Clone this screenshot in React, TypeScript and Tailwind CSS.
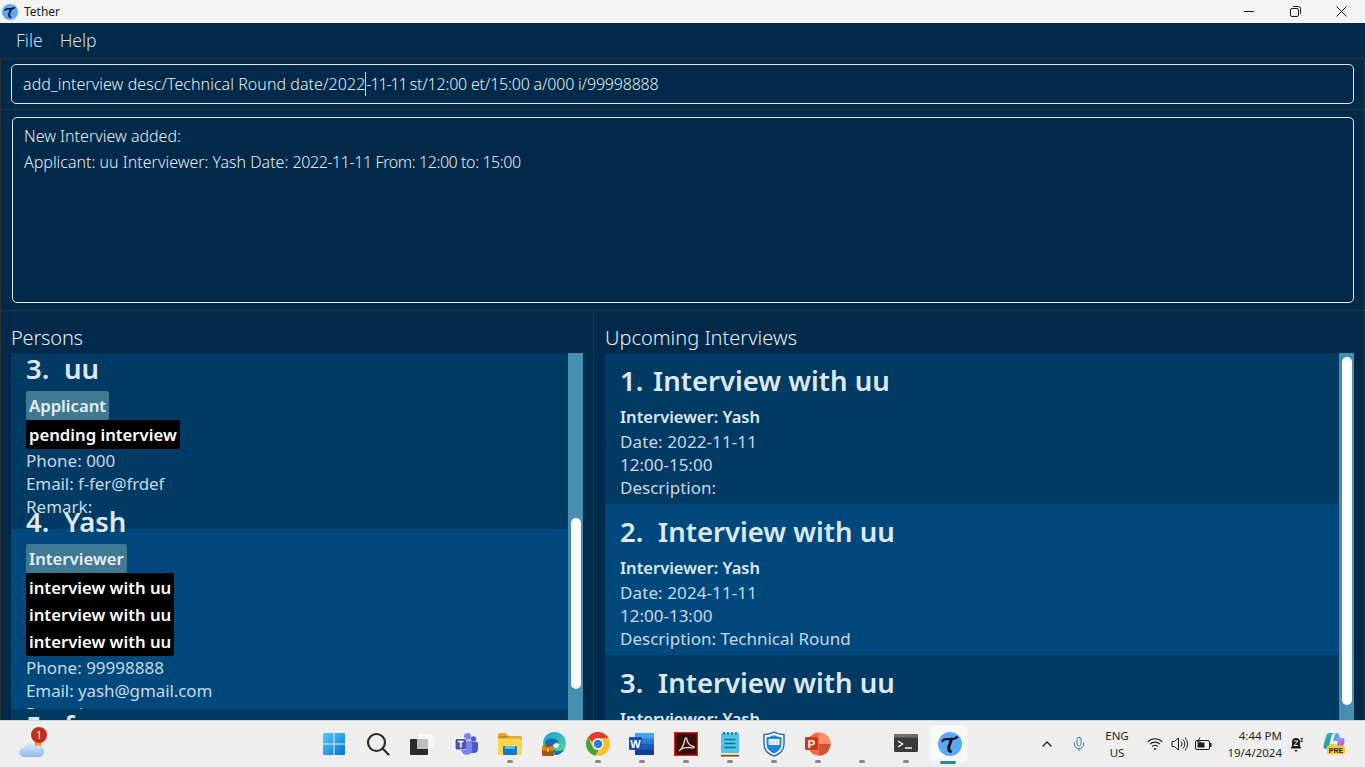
import { ChevronUp, Mic } from "lucide-react";

const uiFont = "font-['Noto_Sans',sans-serif]";

const TetherLogo = ({ size = 16 }: { size?: number }) => (
  <svg width={size} height={size} viewBox="0 0 24 24">
    <circle cx="12" cy="12" r="12" fill="#5aa9f6" />
    <path d="M4.500 9c1.500-2.500 4-2 6.500-1.800 3 .2 6 0 8-2" fill="none" stroke="#0b0b0b" strokeWidth="2.200" strokeLinecap="round" />
    <path d="M13.500 7c-.4 3-2.500 6-2.800 8.500-.2 2 .5 3.500 1.800 4" fill="none" stroke="#0b0b0b" strokeWidth="2.800" strokeLinecap="round" />
  </svg>
);

const WindowsIcon = () => (
  <svg width="24" height="24" viewBox="0 0 24 24">
    <defs>
      <linearGradient id="win" x1="0" y1="0" x2="1" y2="1">
        <stop offset="0" stopColor="#52cdf9" />
        <stop offset="1" stopColor="#0672cb" />
      </linearGradient>
    </defs>
    <path d="M1 2a1 1 0 0 1 1-1h9.500v10.500H1zM12.500 1H22a1 1 0 0 1 1 1v9.500H12.500zM1 12.500h10.500V23H2a1 1 0 0 1-1-1zM12.500 12.500H23V22a1 1 0 0 1-1 1h-9.500z" fill="url(#win)" />
  </svg>
);

const SearchIcon = () => (
  <svg width="24" height="24" viewBox="0 0 24 24" fill="none" stroke="#2b2b2b" strokeWidth="2.200" strokeLinecap="round">
    <circle cx="10.500" cy="10.500" r="8.500" />
    <path d="M16.800 16.800 22.500 22.500" />
  </svg>
);

const TaskViewIcon = () => (
  <svg width="24" height="24" viewBox="0 0 24 24">
    <rect x="7" y="1" width="17" height="16" rx="1.500" fill="#f7f7f7" stroke="#dcdcdc" strokeWidth=".5" />
    <rect x="0" y="7" width="18" height="16" rx="1" fill="#2c2c2c" />
    <rect x="7" y="7" width="11" height="10" fill="#bdbdbd" />
  </svg>
);

const TeamsIcon = () => (
  <svg width="26" height="24" viewBox="0 0 26 24">
    <circle cx="20.500" cy="7" r="2.700" fill="#5059c9" />
    <circle cx="14.500" cy="4.500" r="3.500" fill="#7b83eb" />
    <path d="M17 10h7a1 1 0 0 1 1 1v6a4 4 0 0 1-4 4h-4z" fill="#5059c9" />
    <path d="M8 9h11v9a5 5 0 0 1-5 5 6 6 0 0 1-6-6z" fill="#7b83eb" />
    <rect x="1" y="6" width="12" height="12" fill="#fff" />
    <rect x="2.500" y="7" width="10.500" height="10.500" rx="1" fill="#4b53bc" />
    <path d="M5 9.500h5.500M7.750 9.500v6" stroke="#fff" strokeWidth="1.700" />
  </svg>
);

const ExplorerIcon = () => (
  <svg width="24" height="24" viewBox="0 0 24 24">
    <path d="M0 2.500A1.500 1.500 0 0 1 1.500 1h6l3 3H22a2 2 0 0 1 2 2v6H0z" fill="#e5a82a" />
    <path d="M0 6.500h22a2 2 0 0 1 2 2V21.500a1.500 1.500 0 0 1-1.500 1.500h-21A1.500 1.500 0 0 1 0 21.500z" fill="#ffd54f" />
    <path d="M0 6 9 6 11 4H1z" fill="#c98f1b" />
    <rect x="5" y="14" width="14" height="9" rx="1" fill="#0f7cc4" />
    <rect x="7" y="14" width="10" height="3" fill="#5cc0ef" />
  </svg>
);

const EdgeIcon = () => (
  <svg width="24" height="24" viewBox="0 0 24 24">
    <defs>
      <linearGradient id="edge" x1="0" y1="0" x2="1" y2="1">
        <stop offset="0" stopColor="#1a9fd8" />
        <stop offset=".6" stopColor="#36c2b4" />
        <stop offset="1" stopColor="#82de5c" />
      </linearGradient>
    </defs>
    <circle cx="12.500" cy="11.500" r="11.500" fill="url(#edge)" />
    <path d="M3 12c0-4 4-6 8-5.500 4 .4 6 3 5 6h-3.500c-1.500 0-2.500 1.500-1.500 3.500-4-1-6-3-8-4z" fill="#0f6cbd" />
    <path d="M12 12c2-2 5-1 5 1 0 2.500-3 3.500-5 2.500-1.200-.6-1.200-2.400 0-3.500z" fill="#f0f0f0" />
    <path d="M12 18c3 2 7 1.500 10-1-1.500 4-5 6-9 6z" fill="#0f6cbd" />
    <rect x="0" y="14" width="12" height="10" rx="1" fill="#9c5a12" />
    <rect x="0" y="14" width="12" height="4.500" rx="1" fill="#d68a1e" />
    <rect x="4" y="12" width="4" height="2.500" fill="none" stroke="#8a5010" />
    <rect x="5" y="17.500" width="2" height="2" fill="#ffd98a" />
  </svg>
);

const ChromeIcon = () => (
  <svg width="24" height="24" viewBox="0 0 24 24">
    <circle cx="12" cy="12" r="12" fill="#fbc02d" />
    <path d="M12 0a12 12 0 0 1 10.400 6H12a6 6 0 0 0-5.700 4.100L1.900 5.600A12 12 0 0 1 12 0z" fill="#e53935" />
    <path d="M1.900 5.600 6.500 14.500A6 6 0 0 0 12.500 18L9.200 23.700A12 12 0 0 1 1.900 5.600z" fill="#43a047" />
    <circle cx="12" cy="12" r="5.500" fill="#fff" />
    <circle cx="12" cy="12" r="4.300" fill="#2a7de1" />
  </svg>
);

const WordIcon = () => (
  <svg width="26" height="24" viewBox="0 0 26 24">
    <rect x="6" y="1" width="19" height="22" rx="1" fill="#2b7cd3" />
    <rect x="6" y="1" width="19" height="5.500" fill="#41a5ee" />
    <rect x="6" y="12" width="19" height="5.500" fill="#185abd" />
    <rect x="6" y="17.500" width="19" height="5.500" fill="#103f91" />
    <rect x="0" y="5" width="13" height="13" rx="1" fill="#1a4fb0" />
    <text x="6.500" y="15.500" textAnchor="middle" fontSize="11" fontWeight="700" fill="#fff" fontFamily="'Liberation Sans',sans-serif">W</text>
  </svg>
);

const AcrobatIcon = () => (
  <svg width="24" height="24" viewBox="0 0 24 24">
    <rect x=".5" y=".5" width="23" height="23" fill="#3a0d0d" stroke="#e02020" strokeWidth="1.500" />
    <path d="M5 19c3-2 5-7 6-12 .3-1.500 1.800-1.500 1.800 0 0 3 3 7 6.700 7.500 1 .2.800 1.500-.5 1.300-4-.5-9-.3-11.500 1.200" fill="none" stroke="#e8d6d6" strokeWidth="1.300" />
  </svg>
);

const NotepadIcon = () => (
  <svg width="20" height="26" viewBox="0 0 20 26">
    <rect x="1" y="2" width="18" height="20" rx="1" fill="#4fc3e8" />
    <rect x="1" y="22" width="18" height="2" fill="#f3d9a8" />
    <rect x="1" y="24" width="18" height="1.500" fill="#7b3f12" />
    <path d="M4 1v2.500M8 1v2.500M12 1v2.500M16 1v2.500" stroke="#14607f" strokeWidth="1.500" />
    <path d="M4.500 8.500h11M4.500 12.500h11M4.500 16.500h11" stroke="#14709a" strokeWidth="1.600" />
  </svg>
);

const ShieldIcon = () => (
  <svg width="22" height="26" viewBox="0 0 22 26">
    <path d="M11 1c3 2 6 2.500 10 2.500V13c0 6-4 10-10 12C5 23 1 19 1 13V3.500C5 3.500 8 3 11 1z" fill="#fff" stroke="#2f6db5" strokeWidth="1.500" />
    <path d="M11 4c2.500 1.500 5 2 7.500 2v7c0 4.500-3 7.500-7.500 9.500C6.500 20.500 3.500 17.500 3.500 13V6C6 6 8.500 5.500 11 4z" fill="#1b84d8" />
    <rect x="5.500" y="8" width="11" height="6" rx="1" fill="#fff" />
    <path d="M7.500 10h1M10.500 10h1M13.500 10h1M7.500 12h1M10.500 12h1M13.500 12h1" stroke="#1b84d8" strokeWidth="1.200" />
  </svg>
);

const PowerPointIcon = () => (
  <svg width="26" height="24" viewBox="0 0 26 24">
    <circle cx="14" cy="12" r="11.500" fill="#ed6c47" />
    <path d="M14 .5A11.500 11.500 0 0 1 25.500 12H14z" fill="#ff8f6b" />
    <path d="M14 12h11.500A11.500 11.500 0 0 1 14 23.500z" fill="#d35230" />
    <rect x="0" y="5" width="13" height="13" rx="1" fill="#c43e1c" />
    <text x="6.500" y="15.500" textAnchor="middle" fontSize="11" fontWeight="700" fill="#fff" fontFamily="'Liberation Sans',sans-serif">P</text>
  </svg>
);

const TerminalIcon = () => (
  <svg width="24" height="24" viewBox="0 0 24 24">
    <rect x="0" y="2" width="24" height="18" rx="1.500" fill="#3a3a3a" />
    <rect x="0" y="2" width="24" height="3.500" rx="1" fill="#6e6e6e" />
    <path d="M4 9l4.500 3L4 15" fill="none" stroke="#f2f2f2" strokeWidth="1.500" />
    <path d="M11 16h7" stroke="#f2f2f2" strokeWidth="1.500" />
  </svg>
);

const Cloud = () => (
  <svg width="26" height="18" viewBox="0 0 26 18">
    <defs>
      <linearGradient id="cloud" x1="0" y1="0" x2="0" y2="1">
        <stop offset="0" stopColor="#dbe9fb" />
        <stop offset="1" stopColor="#8fb9ee" />
      </linearGradient>
    </defs>
    <circle cx="19" cy="4" r="3.500" fill="#e89a2c" />
    <path d="M5 17a4.500 4.500 0 0 1-.5-9A7 7 0 0 1 17 6a5.500 5.500 0 0 1 4.500 11z" fill="url(#cloud)" />
  </svg>
);

const Wifi = () => (
  <svg width="16" height="14" viewBox="0 0 16 14" fill="none" stroke="#1f1f1f" strokeWidth="1.100">
    <path d="M.8 4.800a10.200 10.200 0 0 1 14.400 0M3 7.200a7.100 7.100 0 0 1 10 0M5.300 9.500a3.900 3.900 0 0 1 5.400 0" />
    <circle cx="8" cy="12" r="1" fill="#1f1f1f" stroke="none" />
  </svg>
);

const Volume = () => (
  <svg width="17" height="16" viewBox="0 0 17 16" fill="none" stroke="#1f1f1f" strokeWidth="1">
    <path d="M1 5.500h2.500L7.500 2v12l-4-3.500H1z" />
    <path d="M10 5.500a3.500 3.500 0 0 1 0 5M12 3.500a6.500 6.500 0 0 1 0 9M14 1.500a9.500 9.500 0 0 1 0 13" />
  </svg>
);

const Battery = () => (
  <svg width="17" height="14" viewBox="0 0 17 14" fill="none" stroke="#1f1f1f" strokeWidth="1">
    <rect x=".5" y="3.500" width="14" height="9" rx="1.500" />
    <rect x="15" y="6" width="1.500" height="4" fill="#1f1f1f" stroke="none" />
    <path d="M2.500 5.500h7v5h-7z" fill="#1f1f1f" stroke="none" />
    <path d="M5 .5 2.500 5h3L4 8.500" stroke="#1f1f1f" />
  </svg>
);

const Bell = () => (
  <svg width="15" height="16" viewBox="0 0 15 16">
    <path d="M6 2a4 4 0 0 0-4 4v4L.5 12.500h11L10 10V6a4 4 0 0 0-4-4z" fill="#1a1a1a" />
    <path d="M4.500 14h3a1.500 1.500 0 0 1-3 0z" fill="#1a1a1a" />
    <path d="M4 5h4L4 9.500h4" fill="none" stroke="#f0f0f0" strokeWidth="1" />
    <text x="10" y="6" fontSize="6.500" fontWeight="700" fill="#1a1a1a" fontFamily="'Liberation Sans',sans-serif">z</text>
  </svg>
);

const Copilot = () => (
  <svg width="24" height="24" viewBox="0 0 24 24">
    <defs>
      <linearGradient id="cpa" x1="0" y1="0" x2="1" y2="1">
        <stop offset="0" stopColor="#3fb6e8" />
        <stop offset="1" stopColor="#1e8a5e" />
      </linearGradient>
      <linearGradient id="cpb" x1="0" y1="0" x2="1" y2="1">
        <stop offset="0" stopColor="#e88be8" />
        <stop offset="1" stopColor="#7d5be0" />
      </linearGradient>
      <linearGradient id="cpc" x1="0" y1="0" x2="1" y2="0">
        <stop offset="0" stopColor="#7ed957" />
        <stop offset="1" stopColor="#f4d03f" />
      </linearGradient>
    </defs>
    <path d="M7 1h6c-2 0-3 1.500-3.500 3.500L7 14c-.5 2-2 3-3.500 3C2 17 1 15.500 1.500 13.500L4 4c.5-2 1.500-3 3-3z" fill="url(#cpa)" />
    <path d="M14 1c2 0 3 1 3.500 3l2 6c-1-1-3-1-4.500-1h-4l1.500-5c.4-2 1-3 1.500-3z" fill="#4fa6e8" />
    <path d="M15 6h5c2 0 3 2 2.500 4L20 17c-.5 1-2 1-3 1h-4l2-6c.5-2 .5-4 0-6z" fill="url(#cpb)" />
    <path d="M5 18l3-6h6l-2 6z" fill="url(#cpc)" />
    <rect x="5" y="13.500" width="18" height="9" rx="2" fill="#ffc83d" />
    <text x="14" y="20.500" textAnchor="middle" fontSize="7" fontWeight="700" fill="#1a1a1a" fontFamily="'Liberation Sans',sans-serif">PRE</text>
  </svg>
);

const taskbarApps = [
  { key: "start", icon: <WindowsIcon />, dot: false },
  { key: "search", icon: <SearchIcon />, dot: false },
  { key: "taskview", icon: <TaskViewIcon />, dot: false },
  { key: "teams", icon: <TeamsIcon />, dot: false },
  { key: "explorer", icon: <ExplorerIcon />, dot: true },
  { key: "edge", icon: <EdgeIcon />, dot: false },
  { key: "chrome", icon: <ChromeIcon />, dot: true },
  { key: "word", icon: <WordIcon />, dot: true },
  { key: "acrobat", icon: <AcrobatIcon />, dot: true },
  { key: "notepad", icon: <NotepadIcon />, dot: true },
  { key: "shield", icon: <ShieldIcon />, dot: true },
  { key: "ppt", icon: <PowerPointIcon />, dot: true },
  { key: "blank", icon: null, dot: true },
  { key: "terminal", icon: <TerminalIcon />, dot: true },
];

const Person = ({
  no,
  name,
  role,
  tags,
  phone,
  email,
  bg,
  height,
  offset,
}: {
  no: string;
  name: string;
  role: string;
  tags: string[];
  phone: string;
  email: string;
  bg: string;
  height: string;
  offset: string;
}) => (
  <div className={`relative shrink-0 pl-[15px] ${bg} ${height}`}>
    <div className={offset}>
      <div className="h-[38px] text-[27.500px] leading-[32px] font-semibold text-[#dfe9f2] whitespace-pre">
        <span className="inline-block w-[38px]">{no}</span>
        {name}
      </div>
      <div className="w-fit h-[29px] rounded-[2px] px-[3px] text-[16.700px] leading-[29px] font-semibold bg-[#3f7a92] text-[#e8f0f6]">{role}</div>
      {tags.length > 0 && (
        <div className="w-fit rounded-[2px] px-[3px] py-px bg-black text-white text-[16.700px] leading-[27px] font-semibold">
          {tags.map((t, i) => (
            <div key={i}>{t}</div>
          ))}
        </div>
      )}
      <div className="text-[17px] leading-[23px] text-[#c9d8e4]">
        <div>{phone}</div>
        <div className="tracking-[-0.1px]">{email}</div>
        <div>Remark:</div>
      </div>
    </div>
  </div>
);

const Interview = ({
  no,
  noWidth,
  date,
  time,
  desc,
  bg,
}: {
  no: string;
  noWidth: string;
  date: string;
  time: string;
  desc: string;
  bg: string;
}) => (
  <div className={`h-[151px] shrink-0 pl-[15px] pt-[9px] ${bg}`}>
    <div className="h-[42px] text-[27.500px] leading-[38px] font-semibold text-[#dfe9f2] whitespace-pre">
      <span className={`inline-block ${noWidth}`}>{no}</span>
      Interview with uu
    </div>
    <div className="h-[25px] text-[16.500px] leading-[26px] font-semibold text-[#dfe9f2]">Interviewer: Yash</div>
    <div className="text-[17px] leading-[23px] text-[#c9d8e4] pt-[1px]">
      <div className="tracking-[0.1px]">Date: {date}</div>
      <div>{time}</div>
      <div>Description:{desc}</div>
    </div>
  </div>
);

const Scrollbar = ({ spacer, thumb }: { spacer: string; thumb: string }) => (
  <div className="w-[15px] shrink-0 bg-[#468faf] flex flex-col items-center">
    <div className={spacer} />
    <div className={`w-[10px] rounded-full bg-white ${thumb}`} />
  </div>
);

export default function App() {
  return (
    <div className={`w-[1365px] h-[767px] flex flex-col overflow-hidden bg-[#012a4a] ${uiFont}`}>
      {/* window title */}
      <div className="h-[23px] shrink-0 bg-[#f3f3f3] flex items-center pl-[2px]">
        <TetherLogo />
        <span className="ml-[6px] text-[12px] text-[#1a1a1a]">Tether</span>
        <div className="ml-auto flex items-center pr-[1px]">
          <div className="w-[46px] flex justify-center">
            <div className="w-[10px] h-px bg-[#1a1a1a]" />
          </div>
          <div className="w-[46px] flex justify-center">
            <svg width="11" height="11" viewBox="0 0 11 11" fill="none" stroke="#1a1a1a">
              <rect x=".5" y="2.500" width="8" height="8" rx="1.500" />
              <path d="M3 .5h5.500a2 2 0 0 1 2 2V8" />
            </svg>
          </div>
          <div className="w-[46px] flex justify-center">
            <svg width="11" height="11" viewBox="0 0 11 11" stroke="#1a1a1a">
              <path d="M.5.5l10 10M10.500.5l-10 10" />
            </svg>
          </div>
        </div>
      </div>

      {/* menu */}
      <div className="h-[35px] shrink-0 flex items-center pl-[16px] gap-[17px] text-[17.500px] font-light text-[#d3dee7]">
        <span>File</span>
        <span>Help</span>
      </div>

      {/* command box */}
      <div className="h-[51px] shrink-0 border-t border-x border-[#2e3236] pl-[10px] pr-[10px] pt-[5px]">
        <div className="h-[40px] rounded-[5px] border border-[#e3e9ee] pl-[11px] flex items-center text-[16px] font-light text-[#e6edf2] whitespace-pre">
          <span className="tracking-[0.05px]">add_interview desc/Technical Round date/2022</span>
          <span className="inline-block w-px h-[24px] bg-[#c9d3da]" />
          <span className="tracking-[-1.1px]">-11-11 </span>
          <span className="tracking-[-0.2px]">st/12:00 et/15:00 a/000 i/99998888</span>
        </div>
      </div>

      {/* result box */}
      <div className="h-[201px] shrink-0 border-t border-x border-[#2e3236] pl-[11px] pr-[10px] pt-[7px]">
        <div className="h-[186px] rounded-[5px] border border-[#e3e9ee] pl-[11px] pt-[5px] text-[16px] font-light text-[#e6edf2] leading-[26px]">
          <div>New Interview added:</div>
          <div className="whitespace-pre">
            <span>Applicant: uu Interviewer: Yash Date: </span>
            <span className="tracking-[-0.41px]">2022-11-11 From: 12:00 to: 15:00</span>
          </div>
        </div>
      </div>

      {/* lists */}
      <div className="flex-1 min-h-0 flex border-t border-x border-[#2e3236]">
        <div className="w-[593px] shrink-0 border-r border-[#2e3236] flex flex-col pl-[10px] pr-[10px]">
          <div className="h-[42px] shrink-0 pt-[13px] text-[20px] leading-[28px] font-light text-[#e6edf2] tracking-[-0.2px]">Persons</div>
          <div className="flex-1 min-h-0 flex overflow-hidden">
            <div className="flex-1 min-w-0 flex flex-col overflow-hidden">
              <Person
                no="3."
                name="uu"
                role="Applicant"
                tags={["pending interview"]}
                phone="Phone: 000"
                email="Email: f-fer@frdef"
                bg="bg-[#013a63]"
                height="h-[176px]"
                offset="mt-0"
              />
              <Person
                no="4."
                name="Yash"
                role="Interviewer"
                tags={["interview with uu", "interview with uu", "interview with uu"]}
                phone="Phone: 99998888"
                email="Email: yash@gmail.com"
                bg="bg-[#01497c]"
                height="h-[180px]"
                offset="mt-[-23px]"
              />
              <Person no="5." name="f" role="Applicant" tags={[]} phone="" email="" bg="bg-[#013a63]" height="h-[180px]" offset="mt-[1px]" />
            </div>
            <Scrollbar spacer="h-[165px]" thumb="h-[171px]" />
          </div>
        </div>

        <div className="flex-1 min-w-0 flex flex-col pl-[11px] pr-[10px]">
          <div className="h-[42px] shrink-0 pt-[13px] text-[20px] leading-[28px] font-light text-[#e6edf2]">Upcoming Interviews</div>
          <div className="flex-1 min-h-0 flex overflow-hidden">
            <div className="flex-1 min-w-0 flex flex-col overflow-hidden">
              <Interview no="1." noWidth="w-[33px]" date="2022-11-11" time="12:00-15:00" desc="" bg="bg-[#013a63]" />
              <Interview no="2." noWidth="w-[38px]" date="2024-11-11" time="12:00-13:00" desc=" Technical Round" bg="bg-[#01497c]" />
              <Interview no="3." noWidth="w-[38px]" date="2022-11-11" time="12:00-15:00" desc="" bg="bg-[#013a63]" />
            </div>
            <Scrollbar spacer="h-[4px]" thumb="h-[348px]" />
          </div>
        </div>
      </div>

      {/* taskbar */}
      <div className="h-[47px] shrink-0 bg-[#eeeeee] border-t border-[#cfd2d4] flex items-center">
        <div className="relative w-[312px] h-full shrink-0 flex items-center pl-[19px]">
          <div className="mt-[9px]">
            <Cloud />
          </div>
          <div className="absolute left-[31px] top-[6px] w-[16px] h-[16px] rounded-full bg-[#c42b1c] text-white text-[10px] leading-[16px] text-center">1</div>
        </div>
        <div className="flex w-[660px] shrink-0 h-full">
          {taskbarApps.map((a) => (
            <div key={a.key} className="relative w-[44px] h-full flex items-center justify-center">
              {a.icon}
              {a.dot && <div className="absolute bottom-[4px] left-[19px] w-[6px] h-[3px] rounded-full bg-[#8a8a8a]" />}
            </div>
          ))}
          <div className="relative w-[44px] h-full flex items-center justify-center">
            <div className="absolute left-[3px] top-[4px] w-[34px] h-[38px] rounded-[4px] bg-[#f8f8f8] shadow-[3px_0_0_#f4f4f4]" />
            <div className="relative">
              <TetherLogo size={24} />
            </div>
            <div className="absolute bottom-[3px] left-[12px] w-[16px] h-[3px] rounded-full bg-[#1f8a9c]" />
          </div>
        </div>
        <div className="flex-1 h-full flex items-center text-[#1f1f1f] text-[11.500px]">
          <div className="ml-[67px] w-[16px] flex justify-center">
            <ChevronUp size={18} strokeWidth={2} />
          </div>
          <div className="ml-[16px] w-[16px] flex justify-center text-[#1d6f7f]">
            <Mic size={18} strokeWidth={1.300} />
          </div>
          <div className="ml-[6px] w-[48px] text-center leading-[17px]">
            <div>ENG</div>
            <div>US</div>
          </div>
          <div className="ml-[6px]">
            <Wifi />
          </div>
          <div className="ml-[8px]">
            <Volume />
          </div>
          <div className="ml-[7px]">
            <Battery />
          </div>
          <div className="ml-[8px] w-[62px] text-right leading-[17px]">
            <div>4:44 PM</div>
            <div>19/4/2024</div>
          </div>
          <div className="ml-[8px]">
            <Bell />
          </div>
          <div className="ml-[17px]">
            <Copilot />
          </div>
        </div>
      </div>
    </div>
  );
}
